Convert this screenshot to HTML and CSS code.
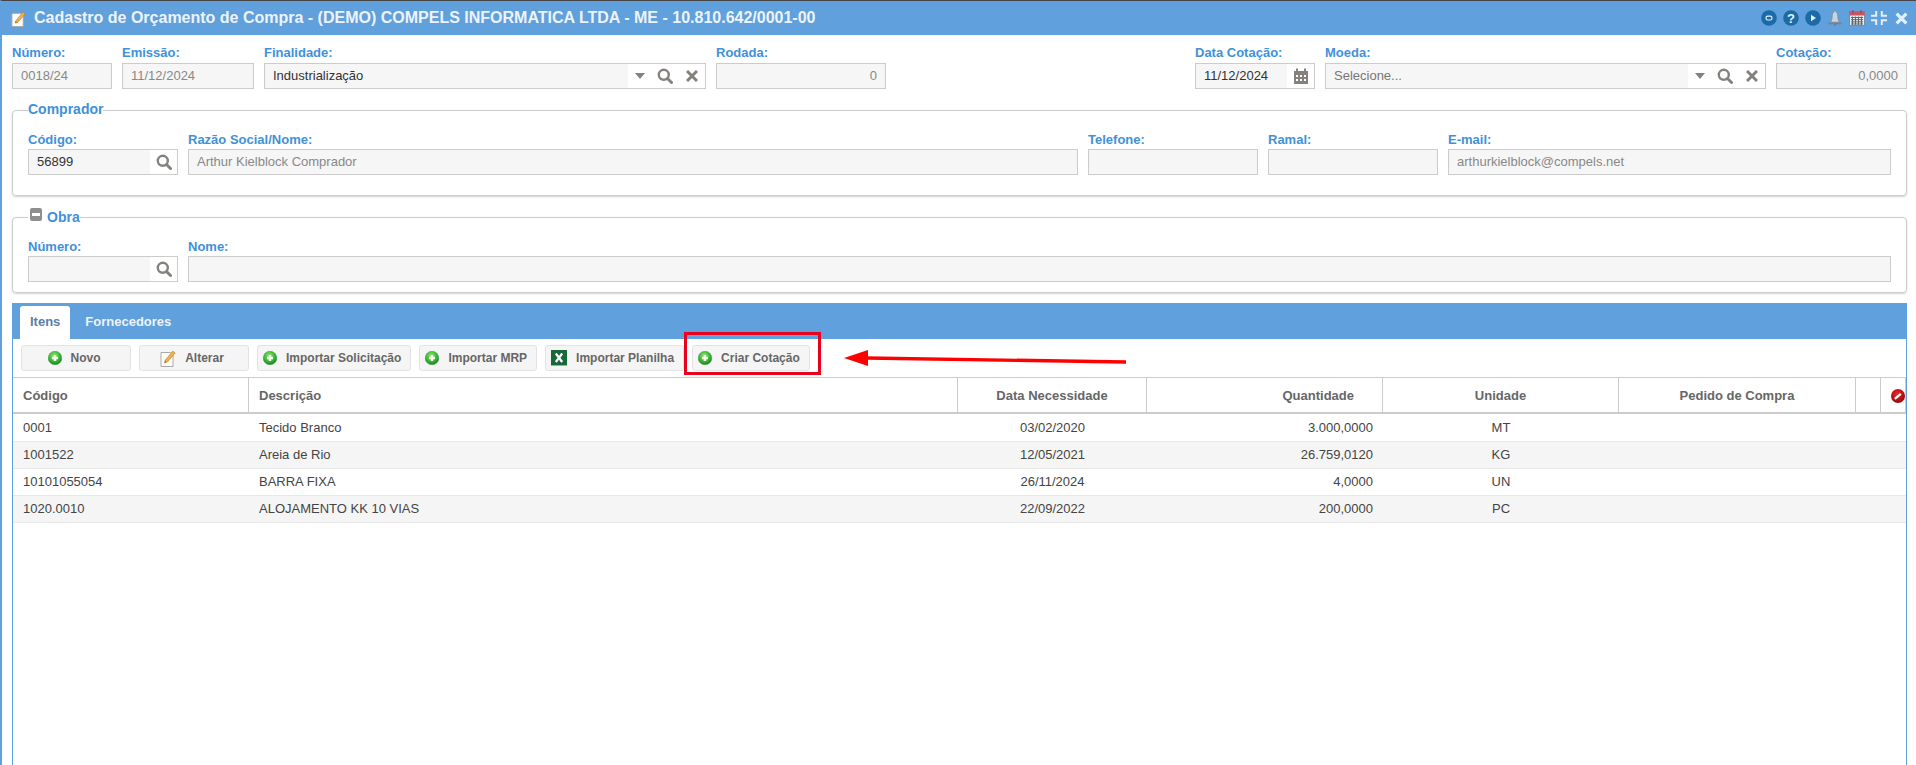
FILE: index.html
```html
<!DOCTYPE html>
<html lang="pt-BR">
<head>
<meta charset="utf-8">
<title>Cadastro de Orçamento de Compra</title>
<link rel="stylesheet" href="styles.css">
</head>
<body>
<svg class="sprite" aria-hidden="true">
  <defs>
    <radialGradient id="gGreen" cx="45%" cy="35%" r="70%">
      <stop offset="0" stop-color="#9be86f"/>
      <stop offset=".55" stop-color="#3db83a"/>
      <stop offset="1" stop-color="#0f7a1a"/>
    </radialGradient>
    <radialGradient id="gRed" cx="45%" cy="35%" r="70%">
      <stop offset="0" stop-color="#f0282a"/>
      <stop offset="1" stop-color="#8e0406"/>
    </radialGradient>
    <symbol id="i-plus" viewBox="0 0 14 14">
      <circle cx="7" cy="7" r="6.8" fill="url(#gGreen)" stroke="#1f8a24" stroke-width=".4"/>
      <path d="M7 4v6M4 7h6" stroke="#f2faee" stroke-width="2.400"/>
    </symbol>
    <symbol id="i-note" viewBox="0 0 16 18">
      <path d="M1 3.500h9.500l2.500 2.500v11.500H1z" fill="#fdfdfa" stroke="#a9a9a4"/>
      <path d="M4.500 13.800l.8-2.800L12.800 2l2.400 2-7.700 9z" fill="#eeb04a" stroke="#b8741c" stroke-width=".5"/>
      <path d="M4.500 13.800l.5-1.800 1.300 1.100z" fill="#5b4a36"/>
    </symbol>
    <symbol id="i-search" viewBox="0 0 16 16">
      <circle cx="6.800" cy="6.800" r="5" fill="none" stroke="#85827d" stroke-width="2.400"/>
      <path d="M10.500 10.500l4 4" stroke="#85827d" stroke-width="3" stroke-linecap="round"/>
    </symbol>
    <symbol id="i-close" viewBox="0 0 12 12">
      <path d="M1 1l10 10M11 1L1 11" stroke="#85827d" stroke-width="3"/>
    </symbol>
    <symbol id="i-caret" viewBox="0 0 10 6">
      <path d="M0 0h10L5 6z" fill="#85827d"/>
    </symbol>
  </defs>
</svg>

<div class="app">
  <header class="titlebar">
    <svg class="title-icon"><use href="#i-note"/></svg>
    <h1 class="title">Cadastro de Orçamento de Compra - (DEMO) COMPELS INFORMATICA LTDA - ME - 10.810.642/0001-00</h1>
    <div class="title-tools">
      <svg class="tool" viewBox="0 0 16 16"><circle cx="8" cy="8" r="7.800" fill="#1c6aa6"/><rect x="5" y="6.200" width="6" height="3.800" rx="1.800" fill="none" stroke="#e8f1f8" stroke-width="1.200"/></svg>
      <svg class="tool" viewBox="0 0 16 16"><circle cx="8" cy="8" r="7.800" fill="#1c6aa6"/><text class="tool-q" x="8" y="12.800" text-anchor="middle">?</text></svg>
      <svg class="tool" viewBox="0 0 16 16"><circle cx="8" cy="8" r="7.800" fill="#1c6aa6"/><path d="M6 4.800l5 3.200-5 3.200z" fill="#e8f1f8"/></svg>
      <svg class="tool" viewBox="0 0 16 16"><path d="M8 .8c1 0 1.300.8 1.300 1.500 1.300.7 1.500 2 1.500 4.200 0 2.700.8 4.500 2 5.700H3.200c1.200-1.200 2-3 2-5.700 0-2.200.2-3.500 1.500-4.200C6.700 1.600 7 .8 8 .8z" fill="#c9d3dc" stroke="#76838f" stroke-width=".7"/><path d="M1.500 12.500h13v1.800h-13z" fill="#76838f"/><path d="M6.600 14.400h2.800L8 15.800z" fill="#5a6570"/></svg>
      <svg class="tool" viewBox="0 0 16 16"><rect x=".5" y="1.500" width="15" height="14" fill="#e9ebee" stroke="#6b7480" stroke-width=".7"/><rect x=".5" y="1.500" width="15" height="4" fill="#d4505f"/><path d="M4 .3v3M12 .3v3" stroke="#59626c" stroke-width="1.400"/><path d="M2 7.500h12M2 9.700h12M2 11.900h12M2 14h12M3.500 6.500v8.300M6.500 6.500v8.300M9.500 6.500v8.300M12.500 6.500v8.300" stroke="#5d6670" stroke-width="1"/></svg>
      <svg class="tool" viewBox="0 0 16 16"><path d="M5.200 1v4.800H0M10.800 1v4.800H16M5.200 15v-4.800H0M10.800 15v-4.800H16" fill="none" stroke="#e6eff8" stroke-width="2"/></svg>
      <svg class="tool tool-x" viewBox="0 0 12 12"><path d="M1.500 1.500l9 9M10.500 1.500l-9 9" stroke="#e6eff8" stroke-width="3"/></svg>
    </div>
  </header>

  <div class="form-row">
    <div class="field w-100"><label class="lbl">Número:</label><div class="box"><span class="val dim">0018/24</span></div></div>
    <div class="field w-132"><label class="lbl">Emissão:</label><div class="box"><span class="val dim">11/12/2024</span></div></div>
    <div class="field w-442"><label class="lbl">Finalidade:</label><div class="box"><span class="val strong">Industrialização</span><span class="addon addon-select"><svg class="ic-caret"><use href="#i-caret"/></svg><svg class="ic-search"><use href="#i-search"/></svg><svg class="ic-close"><use href="#i-close"/></svg></span></div></div>
    <div class="field w-170"><label class="lbl">Rodada:</label><div class="box"><span class="val dim right">0</span></div></div>
    <div class="field w-120 push"><label class="lbl">Data Cotação:</label><div class="box"><span class="val strong">11/12/2024</span><span class="addon addon-one"><svg class="ic-cal" viewBox="0 0 14 16"><path d="M0 3h14v13H0z" fill="#85827d"/><path d="M3 .5v3.500M11 .5v3.500" stroke="#85827d" stroke-width="2"/><path d="M2 7h2v2H2zM6 7h2v2H6zM10 7h2v2h-2zM2 11h2v2H2zM6 11h2v2H6zM10 11h2v2h-2z" fill="#fff"/></svg></span></div></div>
    <div class="field w-441"><label class="lbl">Moeda:</label><div class="box"><span class="val mid">Selecione...</span><span class="addon addon-select"><svg class="ic-caret"><use href="#i-caret"/></svg><svg class="ic-search"><use href="#i-search"/></svg><svg class="ic-close"><use href="#i-close"/></svg></span></div></div>
    <div class="field w-131"><label class="lbl">Cotação:</label><div class="box"><span class="val dim right">0,0000</span></div></div>
  </div>

  <fieldset class="group group-buyer">
    <legend class="legend">Comprador</legend>
    <div class="group-row">
      <div class="field w-150"><label class="lbl">Código:</label><div class="box"><span class="val strong">56899</span><span class="addon addon-one"><svg class="ic-search"><use href="#i-search"/></svg></span></div></div>
      <div class="field grow"><label class="lbl">Razão Social/Nome:</label><div class="box"><span class="val dim">Arthur Kielblock Comprador</span></div></div>
      <div class="field w-170"><label class="lbl">Telefone:</label><div class="box"><span class="val dim"></span></div></div>
      <div class="field w-170"><label class="lbl">Ramal:</label><div class="box"><span class="val dim"></span></div></div>
      <div class="field w-443"><label class="lbl">E-mail:</label><div class="box"><span class="val dim">arthurkielblock@compels.net</span></div></div>
    </div>
  </fieldset>

  <fieldset class="group group-work">
    <legend class="legend legend-icon"><span class="collapse"></span>Obra</legend>
    <div class="group-row">
      <div class="field w-150"><label class="lbl">Número:</label><div class="box"><span class="val dim"></span><span class="addon addon-one"><svg class="ic-search"><use href="#i-search"/></svg></span></div></div>
      <div class="field grow"><label class="lbl">Nome:</label><div class="box"><span class="val dim"></span></div></div>
    </div>
  </fieldset>

  <section class="panel">
    <nav class="tabs">
      <span class="tab active">Itens</span>
      <span class="tab">Fornecedores</span>
    </nav>
    <div class="toolbar">
      <button class="btn btn-wide"><svg class="btn-ic"><use href="#i-plus"/></svg>Novo</button>
      <button class="btn btn-wide"><svg class="btn-ic-note"><use href="#i-note"/></svg>Alterar</button>
      <button class="btn"><svg class="btn-ic"><use href="#i-plus"/></svg>Importar Solicitação</button>
      <button class="btn"><svg class="btn-ic"><use href="#i-plus"/></svg>Importar MRP</button>
      <button class="btn"><svg class="btn-ic-xls" viewBox="0 0 16 16"><rect width="16" height="16" fill="#17683a"/><path d="M0 15h16v1H0z" fill="#7fbf96"/><path d="M4.800 3.500l6.400 8.500M11.200 3.500l-6.400 8.500" stroke="#fff" stroke-width="2.200"/></svg>Importar Planilha</button>
      <button class="btn"><svg class="btn-ic"><use href="#i-plus"/></svg>Criar Cotação</button>
    </div>
    <table class="grid">
      <colgroup>
        <col class="c-code"><col class="c-desc"><col class="c-date"><col class="c-qty"><col class="c-unit"><col class="c-order"><col class="c-blank"><col class="c-del">
      </colgroup>
      <thead>
        <tr>
          <th class="left">Código</th>
          <th class="left">Descrição</th>
          <th>Data Necessidade</th>
          <th class="right th-qty">Quantidade</th>
          <th>Unidade</th>
          <th>Pedido de Compra</th>
          <th></th>
          <th class="th-del"><svg class="ic-del" viewBox="0 0 14 14"><circle cx="7" cy="7" r="7" fill="url(#gRed)"/><path d="M3.800 9.800l6-5" stroke="#fff" stroke-width="2.200"/></svg></th>
        </tr>
      </thead>
      <tbody>
        <tr><td>0001</td><td>Tecido Branco</td><td class="center">03/02/2020</td><td class="right">3.000,0000</td><td class="center">MT</td><td></td><td></td><td></td></tr>
        <tr><td>1001522</td><td>Areia de Rio</td><td class="center">12/05/2021</td><td class="right">26.759,0120</td><td class="center">KG</td><td></td><td></td><td></td></tr>
        <tr><td>10101055054</td><td>BARRA FIXA</td><td class="center">26/11/2024</td><td class="right">4,0000</td><td class="center">UN</td><td></td><td></td><td></td></tr>
        <tr><td>1020.0010</td><td>ALOJAMENTO KK 10 VIAS</td><td class="center">22/09/2022</td><td class="right">200,0000</td><td class="center">PC</td><td></td><td></td><td></td></tr>
      </tbody>
    </table>
  </section>

  <div class="callout-box"></div>
  <svg class="callout-arrow" viewBox="0 0 284 18"><path d="M22 8l260 4" stroke="#f00" stroke-width="3.400"/><path d="M0 8L24 0v16z" fill="#f00"/></svg>
</div>
</body>
</html>
```

FILE: styles.css
```css
* { box-sizing: border-box; }
html, body { margin: 0; height: 100%; background: #fff; overflow: hidden; }
body { font-family: "Liberation Sans", Arial, sans-serif; font-size: 13px; color: #444; }

.sprite { display: block; width: 0; height: 0; }

.app {
  position: relative;
  height: 765px;
  border-top: 1px solid #444;
  border-left: 2px solid #5fa0dd;
  display: flex;
  flex-direction: column;
  overflow: hidden;
}

/* title bar */
.titlebar {
  height: 34px;
  margin-left: -2px;
  background: #5fa0dd;
  display: flex;
  align-items: center;
  padding: 0 8px 0 11px;
  flex: none;
}
.title-icon { width: 15px; height: 17px; flex: none; margin-right: 8px; }
.title { margin: 0; font-size: 16px; font-weight: bold; color: #eef3f9; white-space: nowrap; }
.title-tools { margin-left: auto; display: flex; align-items: center; gap: 6px; }
.tool { width: 16px; height: 16px; display: block; }
.tool-x { width: 13px; height: 13px; margin-left: 2px; }
.tool-q { font: bold 13px "Liberation Sans", Arial, sans-serif; fill: #e8f1f8; }

/* fields */
.form-row { display: flex; gap: 10px; padding: 9px 9px 0 10px; flex: none; }
.form-row .lbl { margin-bottom: 1px; line-height: 18px; }
.field { display: flex; flex-direction: column; flex: none; min-width: 0; }
.field.grow { flex: 1; }
.push { margin-left: auto; }
.w-100 { width: 100px; }
.w-120 { width: 120px; }
.w-131 { width: 131px; }
.w-132 { width: 132px; }
.w-150 { width: 150px; }
.w-170 { width: 170px; }
.w-441 { width: 441px; }
.w-442 { width: 442px; }
.w-443 { width: 443px; }

.lbl { display: block; height: 18px; line-height: 17px; font-size: 13px; font-weight: bold; color: #3f91da; white-space: nowrap; }
.box { display: flex; height: 26px; border: 1px solid #ccc; background: #fff; }
.val { flex: 1; min-width: 0; background: #f6f6f6; line-height: 24px; padding: 0 8px; white-space: nowrap; }
.val.right { text-align: right; }
.dim { color: #888; }
.mid { color: #777; }
.strong { color: #333; }

.addon { flex: none; display: flex; align-items: center; background: #fff; }
.addon-one { width: 27px; justify-content: center; }
.addon-select { width: 77px; padding-left: 7px; }
.ic-search { width: 16px; height: 16px; display: block; flex: none; }
.ic-close { width: 12px; height: 12px; display: block; flex: none; margin-left: 13px; }
.ic-caret { width: 10px; height: 6px; display: block; flex: none; margin-right: 12px; }
.ic-cal { width: 14px; height: 16px; display: block; }

/* groups */
.group {
  margin: 11px 9px 0 10px;
  padding: 0 15px;
  border: 1px solid #ccc;
  border-radius: 4px;
  box-shadow: 0 1px 2px rgba(0, 0, 0, .18);
  min-width: 0;
  flex: none;
}
.group-buyer { padding-bottom: 20px; }
.group-work { padding-bottom: 10px; }
.legend { padding: 0; height: 20px; line-height: 19px; font-size: 14px; font-weight: bold; color: #3f91da; }
.legend-icon { display: flex; align-items: center; padding-left: 2px; }
.collapse { position: relative; display: block; width: 12px; height: 13px; margin: -5px 5px 0 0; background: #8f8f8f; border-radius: 2px; }
.collapse::after { content: ""; position: absolute; left: 2px; right: 2px; top: 5px; height: 3px; background: #fff; }
.group-row { display: flex; gap: 10px; padding-top: 11px; }

/* tab panel */
.panel {
  margin: 10px 9px 0 10px;
  flex: 1;
  min-height: 0;
  border-left: 1px solid #5fa0dd;
  border-right: 1px solid #5fa0dd;
  display: flex;
  flex-direction: column;
}
.tabs { height: 36px; background: #5fa0dd; margin: 0 -1px; display: flex; align-items: flex-end; padding-left: 8px; flex: none; }
.tab { height: 33px; line-height: 32px; padding: 0 10px; font-weight: bold; color: #eef3f9; margin-right: 6px; }
.tab.active { background: #fff; color: #5b7ea5; border-radius: 3px 3px 0 0; margin-right: 5px; }

.toolbar { display: flex; gap: 8px; padding: 6px 8px; flex: none; }
.btn {
  height: 26px;
  padding: 0 9px 0 5px;
  display: flex;
  align-items: center;
  justify-content: center;
  gap: 9px;
  font: bold 12px "Liberation Sans", Arial, sans-serif;
  color: #666;
  background: #f5f5f5;
  border: 1px solid #e3e3e3;
  border-radius: 3px;
}
.btn-wide { width: 110px; }
.btn-ic { width: 14px; height: 14px; display: block; flex: none; }
.btn-ic-note { width: 16px; height: 18px; display: block; flex: none; }
.btn-ic-xls { width: 16px; height: 16px; display: block; flex: none; }

/* table */
.grid { border-collapse: separate; border-spacing: 0; table-layout: fixed; width: 100%; }
.c-code { width: 236px; }
.c-desc { width: 709px; }
.c-date { width: 189px; }
.c-qty { width: 236px; }
.c-unit { width: 236px; }
.c-order { width: 237px; }
.c-blank { width: 25px; }
.c-del { width: 25px; }
.grid th {
  height: 37px;
  padding: 0 10px;
  font-size: 13px;
  font-weight: bold;
  color: #666;
  text-align: center;
  border-top: 1px solid #ccc;
  border-right: 1px solid #ccc;
  border-bottom: 2px solid #ccc;
}
.grid th.left { text-align: left; }
.grid th.right { text-align: right; }
.grid th.th-qty { padding-right: 28px; }
.grid th.th-del { padding: 0; text-align: right; }
.ic-del { width: 14px; height: 14px; display: inline-block; vertical-align: middle; }
.grid td {
  height: 27px;
  padding: 0 10px 1px;
  color: #444;
  border-bottom: 1px solid #e8e8e8;
  white-space: nowrap;
}
.grid tbody tr:first-child td { height: 28px; }
.grid tbody tr:nth-child(even) td { background: #f5f5f5; }
.grid td.center { text-align: center; }
.grid td.right { text-align: right; }

/* annotation drawn over the screen */
.callout-box {
  position: absolute;
  left: 682px;
  top: 331px;
  width: 137px;
  height: 43px;
  border: 3px solid #e8001c;
}
.callout-arrow {
  position: absolute;
  left: 842px;
  top: 349px;
  width: 284px;
  height: 18px;
}
```
